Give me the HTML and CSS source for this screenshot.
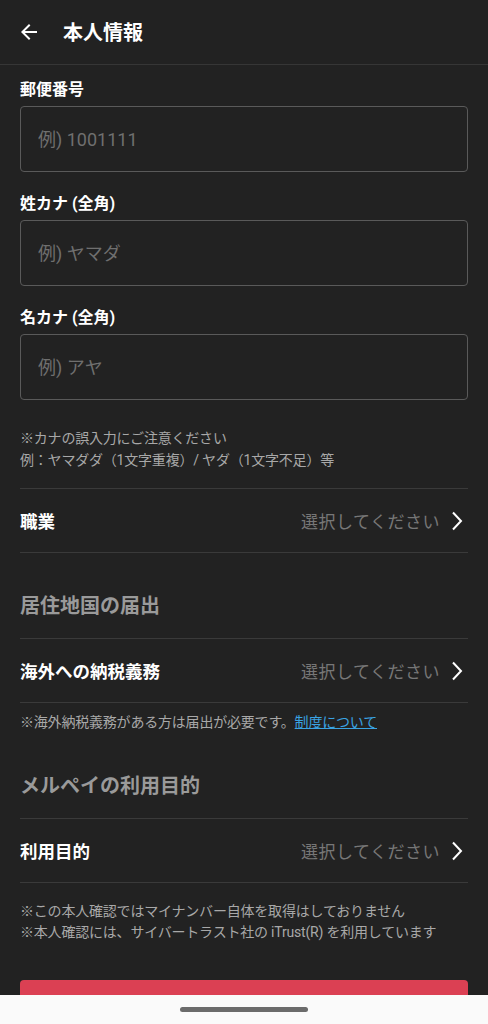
FILE: index.html
```html
<!DOCTYPE html>
<html lang="ja">
<head>
    <meta charset="UTF-8">
    <meta name="viewport" content="width=device-width, initial-scale=1.0">
    <title>本人情報</title>
    <link rel="stylesheet" href="styles.css">
</head>
<body>
    <div class="screen">
        <div class="header">
            <svg class="back" width="24" height="24" viewBox="0 0 24 24"><path d="M20 11H7.83l5.59-5.59L12 4l-8 8 8 8 1.41-1.41L7.83 13H20v-2z" fill="#fff"/></svg>
            <h1 class="title">本人情報</h1>
        </div>

        <div class="content">
            <div class="field">
                <label class="field-label">郵便番号</label>
                <input class="field-input" type="text" placeholder="例) 1001111">
            </div>
            <div class="field">
                <label class="field-label">姓カナ (全角)</label>
                <input class="field-input" type="text" placeholder="例) ヤマダ">
            </div>
            <div class="field">
                <label class="field-label">名カナ (全角)</label>
                <input class="field-input" type="text" placeholder="例) アヤ">
            </div>

            <p class="note note-kana">※カナの誤入力にご注意ください<br>例：ヤマダダ（1文字重複）/ ヤダ（1文字不足）等</p>

            <div class="select-row">
                <span class="row-label">職業</span>
                <span class="row-value">選択してください</span>
                <svg class="chevron" width="12" height="20" viewBox="0 0 12 20"><polyline points="2,1.5 10,10 2,18.5" fill="none" stroke="#fff" stroke-width="2"/></svg>
            </div>

            <h2 class="section-title">居住地国の届出</h2>
            <div class="select-row">
                <span class="row-label">海外への納税義務</span>
                <span class="row-value">選択してください</span>
                <svg class="chevron" width="12" height="20" viewBox="0 0 12 20"><polyline points="2,1.5 10,10 2,18.5" fill="none" stroke="#fff" stroke-width="2"/></svg>
            </div>
            <p class="note note-tax">※海外納税義務がある方は届出が必要です。<a class="link" href="#">制度について</a></p>

            <h2 class="section-title">メルペイの利用目的</h2>
            <div class="select-row">
                <span class="row-label">利用目的</span>
                <span class="row-value">選択してください</span>
                <svg class="chevron" width="12" height="20" viewBox="0 0 12 20"><polyline points="2,1.5 10,10 2,18.5" fill="none" stroke="#fff" stroke-width="2"/></svg>
            </div>

            <p class="note note-bottom">※この本人確認ではマイナンバー自体を取得はしておりません<br>※本人確認には、サイバートラスト社の iTrust(R) を利用しています</p>

            <button class="submit">次へ</button>
        </div>

        <div class="nav-bar"><span class="nav-handle"></span></div>
    </div>
</body>
</html>
```

FILE: styles.css
```css
html, body {
    margin: 0;
    padding: 0;
    background-color: #222222;
}
body {
    font-family: Roboto, "Noto Sans CJK JP", sans-serif;
    color: #ffffff;
}
.screen {
    position: relative;
    height: 1024px;
    overflow: hidden;
}
.header {
    display: flex;
    align-items: center;
    height: 64px;
    padding: 0 17px;
    border-bottom: 1px solid #363636;
}
.back {
    flex: none;
}
.title {
    margin: 2px 0 0 22px;
    font-size: 20px;
    font-weight: bold;
    line-height: 28px;
}
.content {
    padding: 13px 20px 0;
}
.field {
    display: flex;
    flex-direction: column;
    gap: 4px;
    margin-bottom: 20px;
}
.field:last-of-type {
    margin-bottom: 0;
}
.field-label {
    font-size: 16px;
    font-weight: bold;
    line-height: 24px;
}
.field-input {
    box-sizing: border-box;
    height: 66px;
    padding: 0 17px;
    background: transparent;
    border: 1px solid #5a5a5a;
    border-radius: 4px;
    font-family: Roboto, "Noto Sans CJK JP", sans-serif;
    font-size: 18px;
    color: #fff;
    outline: none;
}
.field-input::placeholder {
    color: #6f6f6f;
}
.note {
    margin: 0;
    font-size: 14px;
    letter-spacing: -0.2px;
    color: #a8a8a8;
}
.note-kana {
    margin-top: 27px;
    margin-bottom: 17px;
    line-height: 22px;
}
.note-tax {
    margin-top: 8px;
    line-height: 22px;
}
.note-bottom {
    margin-top: 18px;
    line-height: 21px;
}
.link {
    color: #3aa3e3;
    text-decoration: underline;
}
.select-row {
    display: flex;
    align-items: center;
    height: 63px;
    border-top: 1px solid #3a3a3a;
    border-bottom: 1px solid #3a3a3a;
}
.row-label {
    flex: 1;
    font-size: 17.5px;
    font-weight: bold;
}
.row-value {
    font-size: 17px;
    letter-spacing: 0.5px;
    color: #777777;
}
.chevron {
    margin-left: 11px;
    margin-right: 5px;
}
.section-title {
    margin: 0;
    padding: 40px 0 19px;
    font-size: 20px;
    font-weight: bold;
    line-height: 26px;
    color: #9a9a9a;
}
.submit {
    display: block;
    width: 100%;
    height: 48px;
    margin-top: 37px;
    border: none;
    border-radius: 4px;
    background-color: #db4053;
    color: #fff;
    font-size: 16px;
    font-weight: bold;
    font-family: Roboto, "Noto Sans CJK JP", sans-serif;
}
.nav-bar {
    position: absolute;
    left: 0;
    right: 0;
    bottom: 0;
    height: 29px;
    background-color: #fafafa;
    display: flex;
    align-items: center;
    justify-content: center;
}
.nav-handle {
    width: 128px;
    height: 5px;
    border-radius: 3px;
    background-color: #6b6b6b;
}
```
